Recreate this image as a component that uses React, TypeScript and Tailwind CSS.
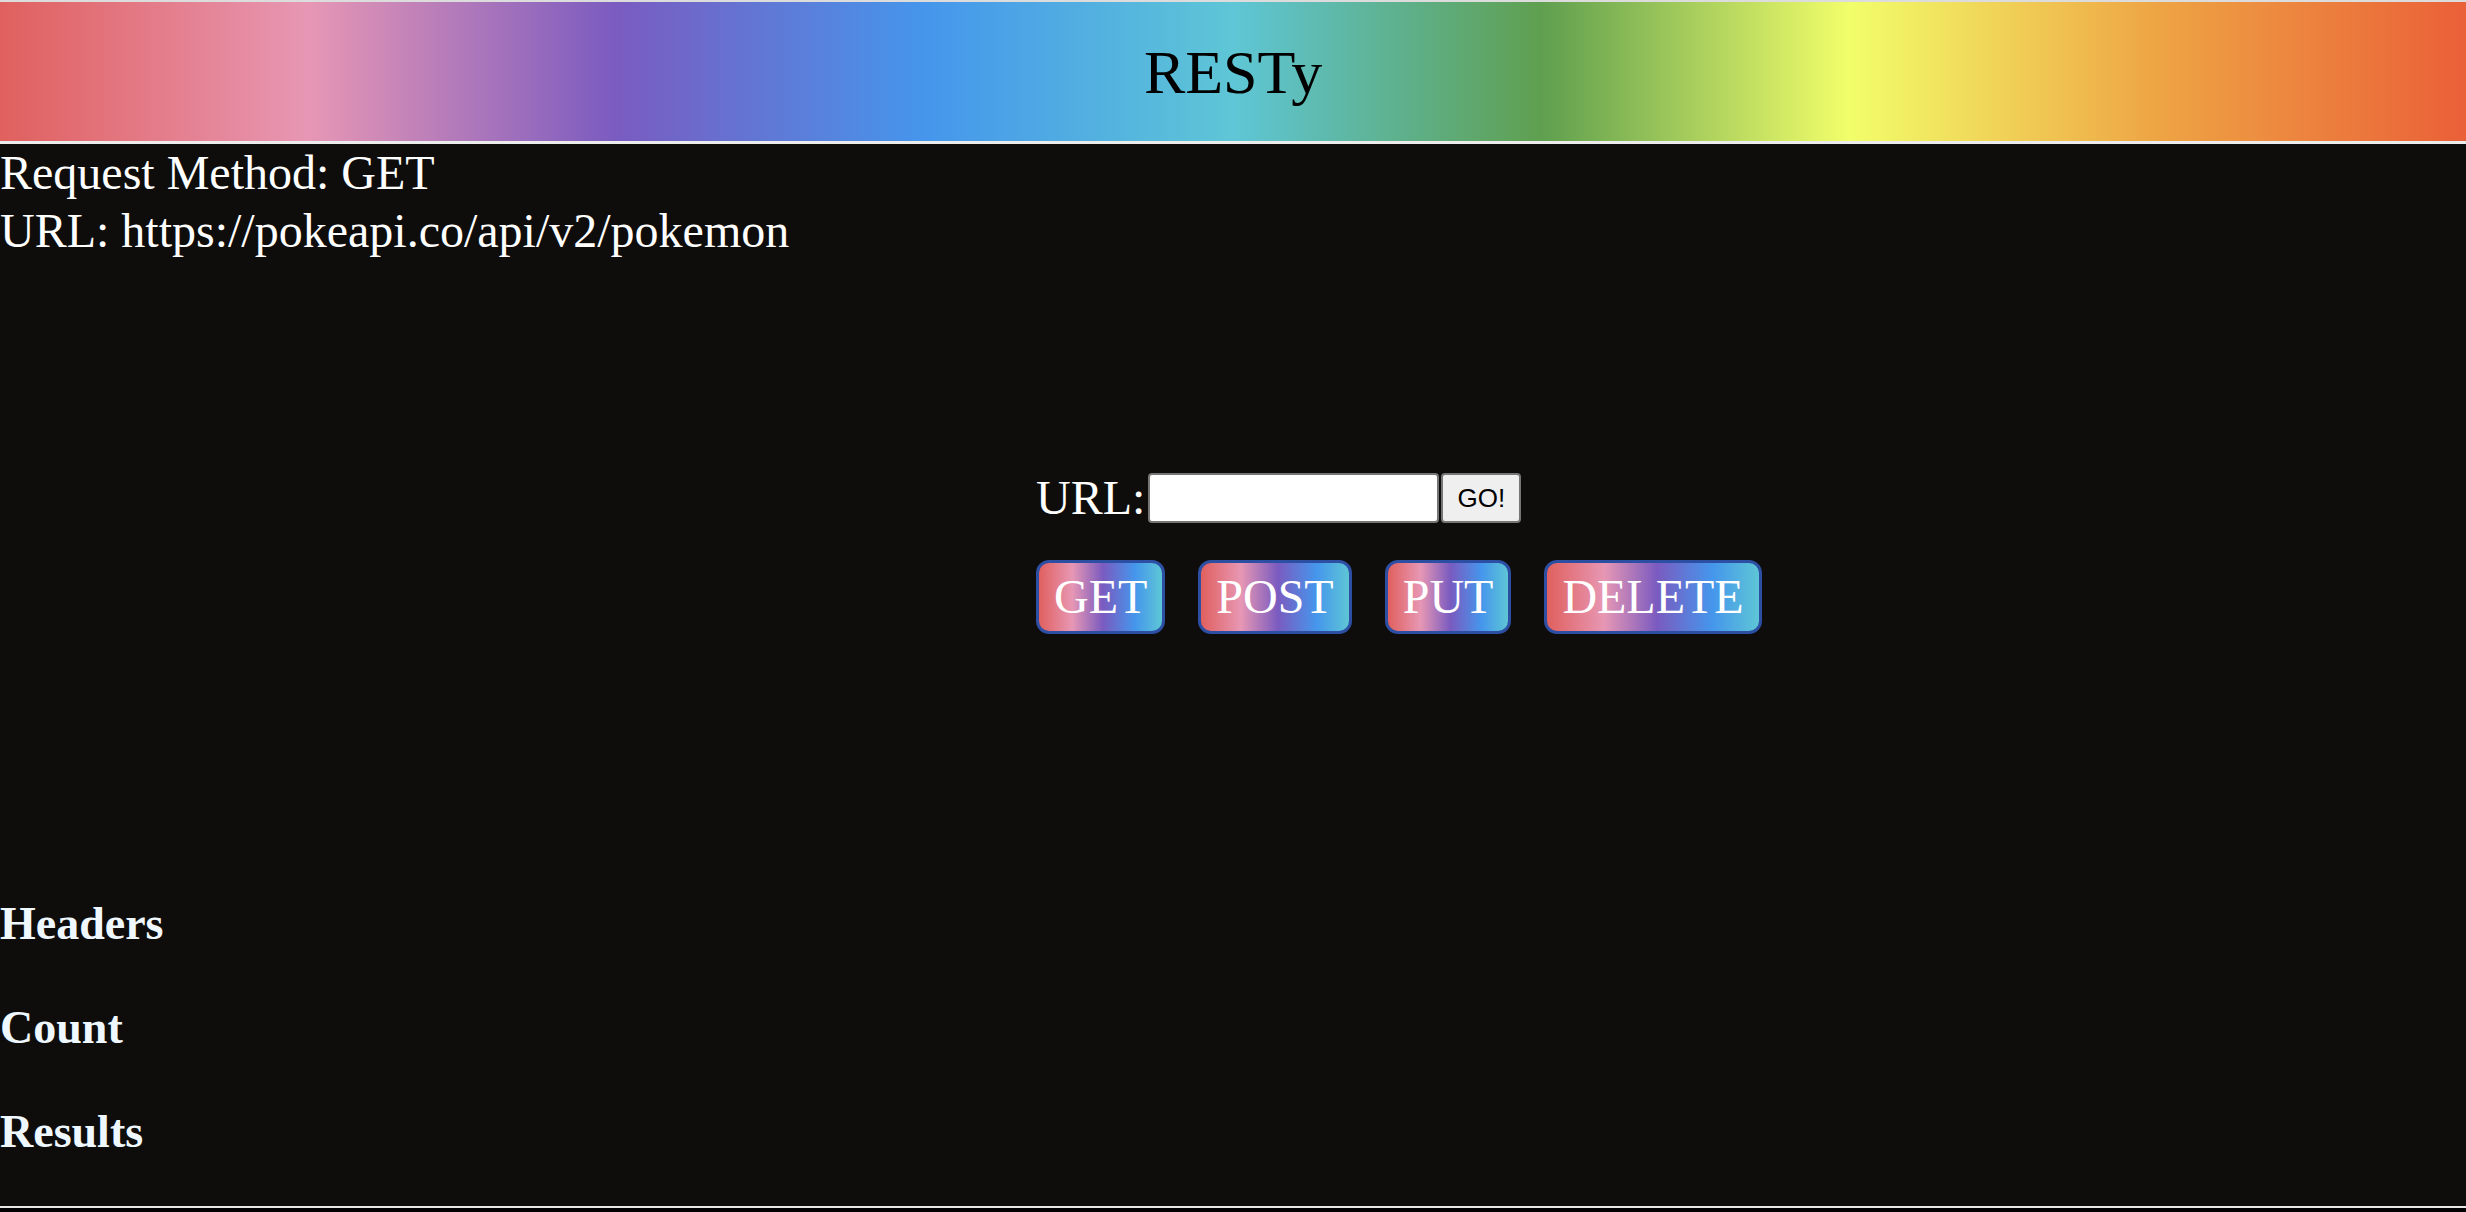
const methods = ['GET', 'POST', 'PUT', 'DELETE'];

const Header = () => (
  <header className="border-t-2 border-b-[3px] border-t-[#dcdcdc] border-b-[#ececec] h-[144px] flex items-center justify-center bg-[linear-gradient(to_right,#e0605e_0%,#e797b4_12.5%,#7a5bc0_25%,#4596ec_37.5%,#5ec6d6_50%,#5f9f4f_62.5%,#f2fe6a_75%,#eea444_87.5%,#ea6038_100%)]">
    <h1 className="text-[62px] leading-none text-black font-normal">RESTy</h1>
  </header>
);

const Form = () => (
  <form className="ml-[1036px] mt-[213px] flex flex-col gap-[37px]" onSubmit={(e) => e.preventDefault()}>
    <div className="flex items-center h-[50px]">
      <label className="text-[48px] leading-none text-white mr-[3px]">URL:</label>
      <input
        type="text"
        className="w-[291px] h-[50px] bg-white border-2 border-[#767676] rounded-[4px] outline-none"
      />
      <button
        type="submit"
        className="ml-[2px] w-[80px] h-[50px] bg-[#efefef] border-2 border-[#767676] rounded-[4px] text-[26px] text-black font-['Liberation_Sans',Arial,sans-serif]"
      >
        GO!
      </button>
    </div>
    <div className="flex gap-[33px]">
      {methods.map((m) => (
        <button
          key={m}
          type="button"
          className="h-[74px] px-[15px] border-[3px] border-[#2c4ea3] rounded-[13px] text-[48px] leading-none text-white bg-[linear-gradient(to_right,#e0605e_0%,#e797b4_27%,#7a5bc0_52%,#4596ec_78%,#5ec6d6_100%)]"
        >
          {m}
        </button>
      ))}
    </div>
  </form>
);

export default function App() {
  return (
    <div className="min-h-screen bg-black font-['Liberation_Serif','Times_New_Roman',serif]">
      <Header />
      <main className="bg-[#0e0d0c] text-white border-b-2 border-[#e6e6e6] pb-[48px]">
        <div className="text-[48px] leading-[58px]">
          <div>Request Method: GET</div>
          <div>URL: https://pokeapi.co/api/v2/pokemon</div>
        </div>
        <Form />
        <section className="mt-[263px] flex flex-col gap-[51px] text-[#f0f8ff]">
          <h2 className="text-[46px] leading-[53px] font-bold">Headers</h2>
          <h2 className="text-[46px] leading-[53px] font-bold">Count</h2>
          <h2 className="text-[46px] leading-[53px] font-bold">Results</h2>
        </section>
      </main>
    </div>
  );
}
